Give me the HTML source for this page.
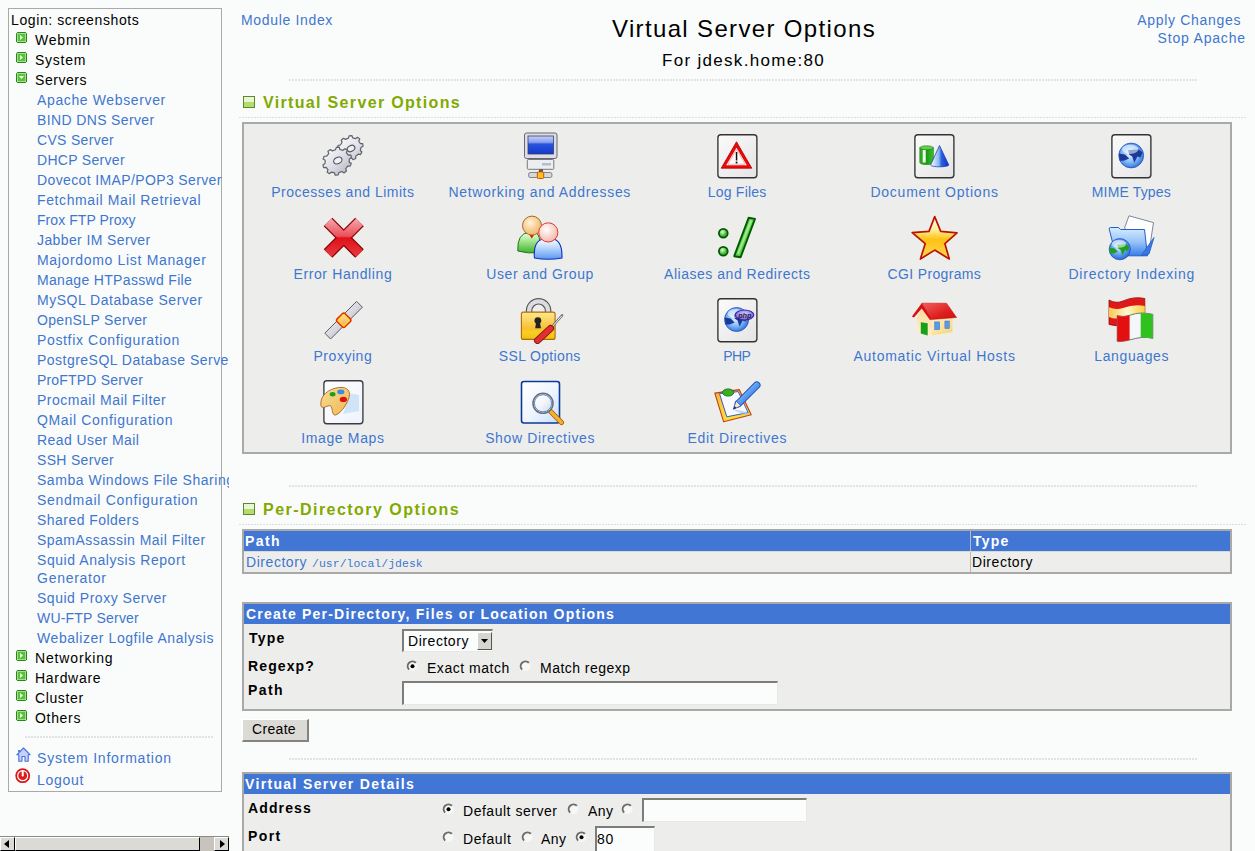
<!DOCTYPE html>
<html><head><meta charset="utf-8"><title>Virtual Server Options</title>
<style>
*{margin:0;padding:0;box-sizing:border-box}
html,body{width:1255px;height:851px;overflow:hidden;background:#fafcfb;font-family:"Liberation Sans",sans-serif;font-size:14px;color:#000}
.a{position:absolute;white-space:nowrap}
svg{display:block}
.dot{position:absolute;height:1px;background-image:linear-gradient(to right,#dcdede 66%,transparent 66%);background-size:3px 1px}
.dot2{position:absolute;height:2px;background-image:linear-gradient(to right,#e2e4e4 66%,transparent 66%);background-size:3px 2px}
.ic{position:absolute;width:48px;height:48px}
.panel{position:absolute;background:#edeeeb;border:2px solid #a9aaa8}
.hdr{position:absolute;background:#4176d4}
.radio{position:absolute;width:12px;height:12px}
.inp{position:absolute;background:#fbfcfc;border-top:2px solid #7d7d7a;border-left:2px solid #7d7d7a;border-right:1px solid #e8e8e6;border-bottom:1px solid #e8e8e6}
</style></head>
<body>
<div style="position:absolute;left:0;top:0;width:229px;height:851px;overflow:hidden"><div style="position:absolute;left:8px;top:8px;width:214px;height:784px;border:1px solid #a8a9a9"></div><div class="a" style="top:11.00px;font-size:14px;line-height:18px;letter-spacing:0.603px;left:11px;">Login: screenshots</div><div style="position:absolute;left:16px;top:32px;width:11px;height:11px"><svg width="11" height="11" viewBox="0 0 11 11"><path d="M1.5 0 H9.5 L11 1.5 V9.5 L9.5 11 H1.5 L0 9.5 V1.5 Z" fill="#2a8420"/><rect x="1" y="1" width="9" height="9" rx="0.5" fill="#b8e8a0"/><rect x="1.8" y="1.8" width="7.4" height="7.4" fill="#58c238"/><path d="M4 3 L7 5.5 L4 8 Z" fill="#fff"/></svg></div><div class="a" style="top:31.00px;font-size:14px;line-height:18px;letter-spacing:0.782px;left:35px;">Webmin</div><div style="position:absolute;left:16px;top:52px;width:11px;height:11px"><svg width="11" height="11" viewBox="0 0 11 11"><path d="M1.5 0 H9.5 L11 1.5 V9.5 L9.5 11 H1.5 L0 9.5 V1.5 Z" fill="#2a8420"/><rect x="1" y="1" width="9" height="9" rx="0.5" fill="#b8e8a0"/><rect x="1.8" y="1.8" width="7.4" height="7.4" fill="#58c238"/><path d="M4 3 L7 5.5 L4 8 Z" fill="#fff"/></svg></div><div class="a" style="top:51.00px;font-size:14px;line-height:18px;letter-spacing:0.748px;left:35px;">System</div><div style="position:absolute;left:16px;top:72px;width:11px;height:11px"><svg width="11" height="11" viewBox="0 0 11 11"><path d="M1.5 0 H9.5 L11 1.5 V9.5 L9.5 11 H1.5 L0 9.5 V1.5 Z" fill="#2a8420"/><rect x="1" y="1" width="9" height="9" rx="0.5" fill="#b8e8a0"/><rect x="1.8" y="1.8" width="7.4" height="7.4" fill="#58c238"/><path d="M3 4 L8 4 L5.5 7 Z" fill="#fff"/></svg></div><div class="a" style="top:71.00px;font-size:14px;line-height:18px;letter-spacing:0.558px;left:35px;">Servers</div><div class="a" style="top:91.00px;font-size:14px;line-height:18px;letter-spacing:0.630px;color:#3f76cf;left:37px;">Apache Webserver</div><div class="a" style="top:111.00px;font-size:14px;line-height:18px;letter-spacing:0.368px;color:#3f76cf;left:37px;">BIND DNS Server</div><div class="a" style="top:131.00px;font-size:14px;line-height:18px;letter-spacing:0.312px;color:#3f76cf;left:37px;">CVS Server</div><div class="a" style="top:151.00px;font-size:14px;line-height:18px;letter-spacing:0.300px;color:#3f76cf;left:37px;">DHCP Server</div><div class="a" style="top:171.00px;font-size:14px;line-height:18px;letter-spacing:0.373px;color:#3f76cf;left:37px;">Dovecot IMAP/POP3 Server</div><div class="a" style="top:191.00px;font-size:14px;line-height:18px;letter-spacing:0.616px;color:#3f76cf;left:37px;">Fetchmail Mail Retrieval</div><div class="a" style="top:211.00px;font-size:14px;line-height:18px;letter-spacing:0.066px;color:#3f76cf;left:37px;">Frox FTP Proxy</div><div class="a" style="top:231.00px;font-size:14px;line-height:18px;letter-spacing:0.386px;color:#3f76cf;left:37px;">Jabber IM Server</div><div class="a" style="top:251.00px;font-size:14px;line-height:18px;letter-spacing:0.669px;color:#3f76cf;left:37px;">Majordomo List Manager</div><div class="a" style="top:271.00px;font-size:14px;line-height:18px;letter-spacing:0.328px;color:#3f76cf;left:37px;">Manage HTPasswd File</div><div class="a" style="top:291.00px;font-size:14px;line-height:18px;letter-spacing:0.508px;color:#3f76cf;left:37px;">MySQL Database Server</div><div class="a" style="top:311.00px;font-size:14px;line-height:18px;letter-spacing:0.342px;color:#3f76cf;left:37px;">OpenSLP Server</div><div class="a" style="top:331.00px;font-size:14px;line-height:18px;letter-spacing:0.652px;color:#3f76cf;left:37px;">Postfix Configuration</div><div class="a" style="top:351.00px;font-size:14px;line-height:18px;letter-spacing:0.474px;color:#3f76cf;left:37px;">PostgreSQL Database Server</div><div class="a" style="top:371.00px;font-size:14px;line-height:18px;letter-spacing:0.180px;color:#3f76cf;left:37px;">ProFTPD Server</div><div class="a" style="top:391.00px;font-size:14px;line-height:18px;letter-spacing:0.513px;color:#3f76cf;left:37px;">Procmail Mail Filter</div><div class="a" style="top:411.00px;font-size:14px;line-height:18px;letter-spacing:0.650px;color:#3f76cf;left:37px;">QMail Configuration</div><div class="a" style="top:431.00px;font-size:14px;line-height:18px;letter-spacing:0.419px;color:#3f76cf;left:37px;">Read User Mail</div><div class="a" style="top:451.00px;font-size:14px;line-height:18px;letter-spacing:0.318px;color:#3f76cf;left:37px;">SSH Server</div><div class="a" style="top:471.00px;font-size:14px;line-height:18px;letter-spacing:0.535px;color:#3f76cf;left:37px;">Samba Windows File Sharing</div><div class="a" style="top:491.00px;font-size:14px;line-height:18px;letter-spacing:0.719px;color:#3f76cf;left:37px;">Sendmail Configuration</div><div class="a" style="top:511.00px;font-size:14px;line-height:18px;letter-spacing:0.464px;color:#3f76cf;left:37px;">Shared Folders</div><div class="a" style="top:531.00px;font-size:14px;line-height:18px;letter-spacing:0.479px;color:#3f76cf;left:37px;">SpamAssassin Mail Filter</div><div class="a" style="top:551.00px;font-size:14px;line-height:18px;letter-spacing:0.554px;color:#3f76cf;left:37px;">Squid Analysis Report</div><div class="a" style="top:569.00px;font-size:14px;line-height:18px;letter-spacing:0.738px;color:#3f76cf;left:37px;">Generator</div><div class="a" style="top:589.00px;font-size:14px;line-height:18px;letter-spacing:0.518px;color:#3f76cf;left:37px;">Squid Proxy Server</div><div class="a" style="top:609.00px;font-size:14px;line-height:18px;letter-spacing:0.205px;color:#3f76cf;left:37px;">WU-FTP Server</div><div class="a" style="top:629.00px;font-size:14px;line-height:18px;letter-spacing:0.566px;color:#3f76cf;left:37px;">Webalizer Logfile Analysis</div><div style="position:absolute;left:16px;top:650px;width:11px;height:11px"><svg width="11" height="11" viewBox="0 0 11 11"><path d="M1.5 0 H9.5 L11 1.5 V9.5 L9.5 11 H1.5 L0 9.5 V1.5 Z" fill="#2a8420"/><rect x="1" y="1" width="9" height="9" rx="0.5" fill="#b8e8a0"/><rect x="1.8" y="1.8" width="7.4" height="7.4" fill="#58c238"/><path d="M4 3 L7 5.5 L4 8 Z" fill="#fff"/></svg></div><div class="a" style="top:649.00px;font-size:14px;line-height:18px;letter-spacing:0.847px;left:35px;">Networking</div><div style="position:absolute;left:16px;top:670px;width:11px;height:11px"><svg width="11" height="11" viewBox="0 0 11 11"><path d="M1.5 0 H9.5 L11 1.5 V9.5 L9.5 11 H1.5 L0 9.5 V1.5 Z" fill="#2a8420"/><rect x="1" y="1" width="9" height="9" rx="0.5" fill="#b8e8a0"/><rect x="1.8" y="1.8" width="7.4" height="7.4" fill="#58c238"/><path d="M4 3 L7 5.5 L4 8 Z" fill="#fff"/></svg></div><div class="a" style="top:669.00px;font-size:14px;line-height:18px;letter-spacing:0.694px;left:35px;">Hardware</div><div style="position:absolute;left:16px;top:690px;width:11px;height:11px"><svg width="11" height="11" viewBox="0 0 11 11"><path d="M1.5 0 H9.5 L11 1.5 V9.5 L9.5 11 H1.5 L0 9.5 V1.5 Z" fill="#2a8420"/><rect x="1" y="1" width="9" height="9" rx="0.5" fill="#b8e8a0"/><rect x="1.8" y="1.8" width="7.4" height="7.4" fill="#58c238"/><path d="M4 3 L7 5.5 L4 8 Z" fill="#fff"/></svg></div><div class="a" style="top:689.00px;font-size:14px;line-height:18px;letter-spacing:0.622px;left:35px;">Cluster</div><div style="position:absolute;left:16px;top:710px;width:11px;height:11px"><svg width="11" height="11" viewBox="0 0 11 11"><path d="M1.5 0 H9.5 L11 1.5 V9.5 L9.5 11 H1.5 L0 9.5 V1.5 Z" fill="#2a8420"/><rect x="1" y="1" width="9" height="9" rx="0.5" fill="#b8e8a0"/><rect x="1.8" y="1.8" width="7.4" height="7.4" fill="#58c238"/><path d="M4 3 L7 5.5 L4 8 Z" fill="#fff"/></svg></div><div class="a" style="top:709.00px;font-size:14px;line-height:18px;letter-spacing:0.682px;left:35px;">Others</div><div class="dot2" style="left:25px;top:736px;width:188px"></div><div style="position:absolute;left:16px;top:747px;width:16px;height:16px"><svg width="16" height="16" viewBox="0 0 16 16"><path d="M0.8 7.8 L7.5 1 L14.2 7.8 H12.2 V14.2 H9 V9.5 H6 V14.2 H2.8 V7.8 Z" fill="#c4d2f8" stroke="#4a6ee0" stroke-width="1.1" stroke-linejoin="round"/><path d="M3 3 V5" stroke="#3c64d8" stroke-width="1.6"/></svg></div><div class="a" style="top:749.00px;font-size:14px;line-height:18px;letter-spacing:0.797px;color:#3f76cf;left:37px;">System Information</div><div style="position:absolute;left:15px;top:768px;width:16px;height:16px"><svg width="16" height="16" viewBox="0 0 16 16"><circle cx="7.7" cy="7.7" r="7.4" fill="#d81818"/><circle cx="7.7" cy="7.7" r="5.6" fill="#fff"/><circle cx="7.7" cy="7.7" r="4.4" fill="#dc1e1e"/><rect x="6.7" y="2.5" width="2" height="6" rx="0.8" fill="#fff"/></svg></div><div class="a" style="top:771.00px;font-size:14px;line-height:18px;letter-spacing:0.692px;color:#3f76cf;left:37px;">Logout</div><div style="position:absolute;left:0;top:836px;width:229px;height:15px;background:#c8c4bd;border-top:1px solid #8a8a88"></div><div style="position:absolute;left:0;top:837px;width:15px;height:14px;background:#dcdad5;border-top:1px solid #fff;border-left:1px solid #fff;border-right:1px solid #000;border-bottom:1px solid #000"></div><svg style="position:absolute;left:4px;top:840px" width="6" height="8"><path d="M5 0 V8 L0 4 Z" fill="#000"/></svg><div style="position:absolute;left:15px;top:837px;width:185px;height:14px;background:#dcdad5;border-top:1px solid #fff;border-left:1px solid #fff;border-right:1px solid #000;border-bottom:1px solid #000"></div><div style="position:absolute;left:214px;top:837px;width:15px;height:14px;background:#dcdad5;border-top:1px solid #fff;border-left:1px solid #fff;border-right:1px solid #000;border-bottom:1px solid #000"></div><svg style="position:absolute;left:220px;top:840px" width="6" height="8"><path d="M0 0 V8 L5 4 Z" fill="#000"/></svg></div><div class="a" style="top:11.00px;font-size:14px;line-height:18px;letter-spacing:0.664px;color:#3f76cf;left:241px;">Module Index</div><div class="a" style="top:15.00px;font-size:24px;line-height:28px;letter-spacing:1.349px;left:612px;">Virtual Server Options</div><div class="a" style="top:51.00px;font-size:17px;line-height:20px;letter-spacing:1.306px;left:662px;">For jdesk.home:80</div><div class="a" style="top:11.00px;font-size:14px;line-height:18px;letter-spacing:0.696px;color:#3f76cf;right:13.80px;">Apply Changes</div><div class="a" style="top:29.00px;font-size:14px;line-height:18px;letter-spacing:0.803px;color:#3f76cf;right:9.20px;">Stop Apache</div><div class="dot2" style="left:289px;top:79px;width:908px"></div><div style="position:absolute;left:243px;top:96px;width:12px;height:12px"><svg width="12" height="12" viewBox="0 0 12 12"><rect x="0.5" y="0.5" width="11" height="11" fill="#b4dc6a" stroke="#5a8a30"/><rect x="1" y="1" width="10" height="5" fill="#eaf6d2"/></svg></div><div class="a" style="top:93.00px;font-size:16px;line-height:20px;letter-spacing:1.334px;font-weight:bold;color:#82a900;left:263px;">Virtual Server Options</div><div class="dot" style="left:239px;top:117px;width:1008px"></div><div class="panel" style="left:242px;top:122px;width:990px;height:332px"></div><div class="ic" style="left:319px;top:132px"><svg width="48" height="48" viewBox="0 0 48 48"><defs><linearGradient id="gg1" x1="0" y1="0" x2="1" y2="1"><stop offset="0" stop-color="#ffffff"/><stop offset="0.6" stop-color="#e0e0e8"/><stop offset="1" stop-color="#b8bac4"/></linearGradient><linearGradient id="gg2" x1="0" y1="0" x2="1" y2="1"><stop offset="0" stop-color="#ffffff"/><stop offset="0.5" stop-color="#dcdde6"/><stop offset="1" stop-color="#b0b2bc"/></linearGradient></defs><path d="M41.31 11.54 L43.64 11.59 L44.08 14.33 L41.95 15.47 L41.33 18.52 L42.93 20.01 L41.40 22.57 L39.14 22.18 L36.66 24.33 L36.78 26.56 L34.00 27.73 L32.67 26.00 L29.48 26.24 L28.07 28.16 L25.33 27.40 L25.55 25.14 L23.15 23.36 L20.87 24.08 L19.45 21.74 L21.12 20.01 L20.64 17.03 L18.55 16.21 L19.12 13.39 L21.46 13.00 L23.11 10.23 L22.20 8.25 L24.49 6.27 L26.40 7.39 L29.42 6.12 L30.10 3.91 L33.04 3.69 L33.63 5.81 L36.60 6.64 L38.57 5.23 L40.78 6.88 L39.77 9.00 Z" fill="url(#gg1)" stroke="#60636a" stroke-width="1.2" stroke-linejoin="round"/><ellipse cx="32" cy="16.5" rx="4" ry="2.9" transform="rotate(-28 32 16.5)" fill="#f0f0f4" stroke="#55585e" stroke-width="1.2"/><path d="M29.19 23.06 L31.72 22.80 L32.53 25.50 L30.36 26.96 L30.22 30.12 L32.28 31.34 L31.23 34.14 L28.71 34.17 L26.67 36.83 L27.46 39.06 L24.96 40.90 L23.04 39.48 L19.88 40.63 L19.11 43.02 L16.10 43.18 L15.53 40.87 L12.45 40.06 L10.40 41.69 L8.04 40.12 L9.04 37.80 L7.21 35.34 L4.68 35.60 L3.87 32.90 L6.04 31.44 L6.18 28.28 L4.12 27.06 L5.17 24.26 L7.69 24.23 L9.73 21.57 L8.94 19.34 L11.44 17.50 L13.36 18.92 L16.52 17.77 L17.29 15.38 L20.30 15.22 L20.87 17.53 L23.95 18.34 L26.00 16.71 L28.36 18.28 L27.36 20.60 Z" fill="url(#gg2)" stroke="#60636a" stroke-width="1.2" stroke-linejoin="round"/><ellipse cx="18.8" cy="28.5" rx="4.4" ry="3.2" transform="rotate(-28 18.8 28.5)" fill="#f0f0f4" stroke="#55585e" stroke-width="1.2"/></svg></div><div class="a" style="top:183.00px;font-size:14px;line-height:18px;letter-spacing:0.514px;color:#3f76cf;left:271.19px;">Processes and Limits</div><div class="ic" style="left:516px;top:132px"><svg width="48" height="48" viewBox="0 0 48 48"><defs><linearGradient id="scr" x1="0" y1="0" x2="0" y2="1"><stop offset="0" stop-color="#c8d0f4"/><stop offset="0.35" stop-color="#8aa0ee"/><stop offset="0.45" stop-color="#2a54e0"/><stop offset="1" stop-color="#1438c8"/></linearGradient></defs><rect x="8.5" y="1" width="32.5" height="25.5" rx="2" fill="#dcdde6" stroke="#66686e" stroke-width="1"/><rect x="12" y="4" width="25.5" height="18" fill="url(#scr)" stroke="#39406a" stroke-width="0.8"/><rect x="11.3" y="27.5" width="26.5" height="9.8" rx="1" fill="#eceef2" stroke="#76787e"/><rect x="26" y="31" width="9" height="2.5" fill="#b8bcc8"/><rect x="23" y="37.3" width="4" height="3" fill="#555"/><rect x="12.7" y="40.5" width="23.2" height="5" rx="1.5" fill="#d8d8dc" stroke="#77797e" stroke-width="0.9"/><rect x="21.3" y="39.9" width="6.4" height="6.6" rx="1" fill="#f8c020" stroke="#d05010" stroke-width="1"/></svg></div><div class="a" style="top:183.00px;font-size:14px;line-height:18px;letter-spacing:0.665px;color:#3f76cf;left:448.50px;">Networking and Addresses</div><div class="ic" style="left:713px;top:132px"><svg width="48" height="48" viewBox="0 0 48 48"><defs><linearGradient id="boxg" x1="0" y1="0" x2="1" y2="1"><stop offset="0" stop-color="#fbfbfb"/><stop offset="1" stop-color="#e4e4e4"/></linearGradient></defs><rect x="4.9" y="2.7" width="39" height="43" rx="3" fill="url(#boxg)" stroke="#333" stroke-width="1.35"/><path d="M23.5 9.8 L38.8 36.2 H8.2 Z" fill="#e80a0a" stroke="#b00000" stroke-width="0.8" stroke-linejoin="round"/><path d="M23.5 15.8 L33.8 33.3 H13.2 Z" fill="#fff"/><path d="M23.5 17.5 L32 32.2 H15 Z" fill="none" stroke="#f4a0a0" stroke-width="0.8"/><rect x="22.8" y="20" width="1.5" height="8.5" fill="#111"/><rect x="22.7" y="29.6" width="1.8" height="1.8" fill="#111"/></svg></div><div class="a" style="top:183.00px;font-size:14px;line-height:18px;letter-spacing:0.241px;color:#3f76cf;left:707.63px;">Log Files</div><div class="ic" style="left:910px;top:132px"><svg width="48" height="48" viewBox="0 0 48 48"><defs><linearGradient id="boxg" x1="0" y1="0" x2="1" y2="1"><stop offset="0" stop-color="#fbfbfb"/><stop offset="1" stop-color="#e4e4e4"/></linearGradient><linearGradient id="cyl" x1="0" y1="0" x2="1" y2="0"><stop offset="0" stop-color="#30b020"/><stop offset="0.5" stop-color="#1a9a10"/><stop offset="1" stop-color="#3ac030"/></linearGradient><linearGradient id="cone" x1="0" y1="0" x2="1" y2="0"><stop offset="0" stop-color="#ffffff"/><stop offset="0.45" stop-color="#8ab8f0"/><stop offset="0.6" stop-color="#2a60e0"/><stop offset="1" stop-color="#1030c0"/></linearGradient></defs><rect x="4.9" y="2.7" width="39" height="43" rx="3" fill="url(#boxg)" stroke="#333" stroke-width="1.35"/><path d="M9.8 15.8 V30.6 A6.8 2 0 0 0 23.4 30.6 V15.8 Z" fill="url(#cyl)" stroke="#1a7a10" stroke-width="0.6"/><ellipse cx="16.6" cy="15.8" rx="6.8" ry="2" fill="#60d050" stroke="#1a7a10" stroke-width="0.6"/><rect x="12.7" y="18" width="3" height="12.5" fill="#f0fff0"/><path d="M29.5 13.5 L38.8 33 A9 1.8 0 0 1 20.6 33 Z" fill="url(#cone)" stroke="#1030b0" stroke-width="0.7"/></svg></div><div class="a" style="top:183.00px;font-size:14px;line-height:18px;letter-spacing:0.777px;color:#3f76cf;left:870.40px;">Document Options</div><div class="ic" style="left:1107px;top:132px"><svg width="48" height="48" viewBox="0 0 48 48"><defs><linearGradient id="boxg" x1="0" y1="0" x2="1" y2="1"><stop offset="0" stop-color="#fbfbfb"/><stop offset="1" stop-color="#e4e4e4"/></linearGradient><radialGradient id="gsea" cx="0.45" cy="0.45" r="0.6"><stop offset="0" stop-color="#eaf4ff"/><stop offset="0.55" stop-color="#80b8f6"/><stop offset="1" stop-color="#2a6ad8"/></radialGradient></defs><rect x="4.9" y="2.7" width="39" height="43" rx="3" fill="url(#boxg)" stroke="#333" stroke-width="1.35"/><circle cx="24.2" cy="23.5" r="12.4" fill="url(#gsea)" stroke="#1c50c0" stroke-width="0.8"/><path d="M11.80 21.43 L18.00 22.47 L22.13 26.60 L16.97 28.67 L12.83 28.67 Z" fill="#1a3a98"/><path d="M21.10 18.33 L31.43 17.30 L35.57 20.40 L33.50 25.57 L30.40 24.53 L27.30 30.73 L25.23 24.53 L22.13 22.47 Z" fill="#1a3a98"/><ellipse cx="23.17" cy="17.30" rx="8.27" ry="4.65" fill="#ffffff" opacity="0.55"/></svg></div><div class="a" style="top:183.00px;font-size:14px;line-height:18px;letter-spacing:0.162px;color:#3f76cf;left:1091.77px;">MIME Types</div><div class="ic" style="left:319px;top:214px"><svg width="48" height="48" viewBox="0 0 48 48"><defs><linearGradient gradientUnits="userSpaceOnUse"  id="xg" x1="0" y1="6" x2="0" y2="42"><stop offset="0" stop-color="#f4a0a8"/><stop offset="0.45" stop-color="#ea5058"/><stop offset="0.5" stop-color="#e01018"/><stop offset="1" stop-color="#e83840"/></linearGradient></defs><g stroke="#8a0000" stroke-width="2.6" stroke-linejoin="round"><path d="M9 8 L40.5 39.5" stroke-width="12.2"/><path d="M40.5 8 L9 39.5" stroke-width="12.2"/></g><g stroke="url(#xg)" stroke-linecap="butt"><path d="M9 8 L40.5 39.5" stroke-width="9.6"/><path d="M40.5 8 L9 39.5" stroke-width="9.6"/></g></svg></div><div class="a" style="top:265.00px;font-size:14px;line-height:18px;letter-spacing:0.621px;color:#3f76cf;left:293.43px;">Error Handling</div><div class="ic" style="left:516px;top:214px"><svg width="48" height="48" viewBox="0 0 48 48"><defs><linearGradient id="gb" x1="0" y1="0" x2="0" y2="1"><stop offset="0" stop-color="#f0fff0"/><stop offset="0.4" stop-color="#a8e890"/><stop offset="1" stop-color="#40b030"/></linearGradient><linearGradient id="bb" x1="0" y1="0" x2="0" y2="1"><stop offset="0" stop-color="#ffffff"/><stop offset="0.35" stop-color="#c8e0ff"/><stop offset="1" stop-color="#5a98f0"/></linearGradient><radialGradient id="hd1" cx="0.4" cy="0.35" r="0.7"><stop offset="0" stop-color="#fff4d8"/><stop offset="1" stop-color="#f0b060"/></radialGradient><radialGradient id="hd2" cx="0.4" cy="0.35" r="0.7"><stop offset="0" stop-color="#ffffff"/><stop offset="1" stop-color="#f4b4a4"/></radialGradient></defs><path d="M1.8 37 Q1 19 13 18.5 H19 Q25 19 24 38.5 Q12 40 1.8 37 Z" fill="url(#gb)" stroke="#1a7a10" stroke-width="1"/><path d="M13.5 21 L18 21 L15.8 24.5 Z" fill="#e01010"/><circle cx="16" cy="11.6" r="9.5" fill="url(#hd1)" stroke="#a86a28" stroke-width="1"/><path d="M18.5 44 Q16.5 26 29 24.8 H36 Q46.5 26 46 44 Q32 46.5 18.5 44 Z" fill="url(#bb)" stroke="#1030c0" stroke-width="1.1"/><circle cx="32.3" cy="18.4" r="9.6" fill="url(#hd2)" stroke="#e03838" stroke-width="1"/></svg></div><div class="a" style="top:265.00px;font-size:14px;line-height:18px;letter-spacing:0.569px;color:#3f76cf;left:486.30px;">User and Group</div><div class="ic" style="left:713px;top:214px"><svg width="48" height="48" viewBox="0 0 48 48"><defs><radialGradient id="ad" cx="0.4" cy="0.35" r="0.6"><stop offset="0" stop-color="#e8ffe0"/><stop offset="0.5" stop-color="#70d060"/><stop offset="1" stop-color="#20a020"/></radialGradient></defs><circle cx="10.3" cy="19.3" r="4.4" fill="url(#ad)" stroke="#005a00" stroke-width="1.8"/><circle cx="10.3" cy="37.3" r="4.4" fill="url(#ad)" stroke="#005a00" stroke-width="1.8"/><path d="M35.6 3.8 L42 4.9 L27.6 43.2 L21.2 42.2 Z" fill="#5ad04a" stroke="#005a00" stroke-width="1.9" stroke-linejoin="round"/><path d="M37 6 L39.5 6.5 L26 40 L24 39.7 Z" fill="#c0f0b0" opacity="0.7"/></svg></div><div class="a" style="top:265.00px;font-size:14px;line-height:18px;letter-spacing:0.525px;color:#3f76cf;left:664.05px;">Aliases and Redirects</div><div class="ic" style="left:910px;top:214px"><svg width="48" height="48" viewBox="0 0 48 48"><defs><linearGradient id="st" x1="0" y1="0" x2="0" y2="1"><stop offset="0" stop-color="#fffff0"/><stop offset="0.3" stop-color="#fff0a0"/><stop offset="0.55" stop-color="#ffc010"/><stop offset="1" stop-color="#ffd860"/></linearGradient></defs><path d="M24.7 2.6 L30.7 17.4 L47 18.9 L34.9 29.7 L39.3 45 L24.7 36.1 L10.4 45 L15.2 29.7 L2.2 18.6 L19 17.4 Z" fill="url(#st)" stroke="#b81400" stroke-width="1.7" stroke-linejoin="round"/></svg></div><div class="a" style="top:265.00px;font-size:14px;line-height:18px;letter-spacing:0.349px;color:#3f76cf;left:887.55px;">CGI Programs</div><div class="ic" style="left:1107px;top:214px"><svg width="48" height="48" viewBox="0 0 48 48"><defs><linearGradient id="fb" x1="0" y1="0" x2="0" y2="1"><stop offset="0" stop-color="#d8ecff"/><stop offset="0.5" stop-color="#98c4f8"/><stop offset="1" stop-color="#3a7ee8"/></linearGradient><radialGradient id="gsea2" cx="0.45" cy="0.4" r="0.6"><stop offset="0" stop-color="#e0f0ff"/><stop offset="0.5" stop-color="#70acf4"/><stop offset="1" stop-color="#2a6ad8"/></radialGradient></defs><path d="M22 1.8 L46.5 8.6 L41.8 39 L17.5 14 Z" fill="#ffffff" stroke="#6a7a9a" stroke-width="0.9"/><path d="M2.2 15 Q2 13.5 3.5 13.5 H11.5 L13.5 15.5 H37.5 L40.5 41.8 H9 Z" fill="url(#fb)" stroke="#2060c8" stroke-width="1"/><path d="M47 23.5 L42 40 L34 41.8 Z" fill="#3a78e0" stroke="#2060c8" stroke-width="0.8"/><circle cx="12.8" cy="35.2" r="10.6" fill="url(#gsea2)" stroke="#1c50c0" stroke-width="0.8"/><path d="M2.20 33.43 L7.50 34.32 L11.03 37.85 L6.62 39.62 L3.08 39.62 Z" fill="#20a020"/><path d="M10.15 30.78 L18.98 29.90 L22.52 32.55 L20.75 36.97 L18.10 36.08 L15.45 41.38 L13.68 36.08 L11.03 34.32 Z" fill="#20a020"/><ellipse cx="11.92" cy="29.90" rx="7.07" ry="3.97" fill="#ffffff" opacity="0.55"/></svg></div><div class="a" style="top:265.00px;font-size:14px;line-height:18px;letter-spacing:0.764px;color:#3f76cf;left:1068.49px;">Directory Indexing</div><div class="ic" style="left:319px;top:296px"><svg width="48" height="48" viewBox="0 0 48 48"><defs><linearGradient id="bar" x1="0" y1="0" x2="1" y2="1"><stop offset="0" stop-color="#ffffff"/><stop offset="0.5" stop-color="#d8d8e0"/><stop offset="1" stop-color="#9a9ca8"/></linearGradient><linearGradient id="osq" x1="0" y1="0" x2="1" y2="1"><stop offset="0" stop-color="#fff0b0"/><stop offset="1" stop-color="#f0a040"/></linearGradient></defs><path d="M5.8 37.2 L37.6 5.4 L43.4 11.2 L11.6 43 Z" fill="url(#bar)" stroke="#5a5c62" stroke-width="1" stroke-linejoin="round"/><rect x="19.1" y="18.7" width="11.2" height="11.2" rx="2" transform="rotate(45 24.7 24.3)" fill="url(#osq)" stroke="#e03000" stroke-width="1.5"/><rect x="20.6" y="20.2" width="8.2" height="8.2" rx="1" transform="rotate(45 24.7 24.3)" fill="none" stroke="#ffe020" stroke-width="1"/></svg></div><div class="a" style="top:347.00px;font-size:14px;line-height:18px;letter-spacing:0.541px;color:#3f76cf;left:313.47px;">Proxying</div><div class="ic" style="left:516px;top:296px"><svg width="48" height="48" viewBox="0 0 48 48"><defs><linearGradient id="lk" x1="0" y1="0" x2="0" y2="1"><stop offset="0" stop-color="#ffe890"/><stop offset="0.6" stop-color="#f8c030"/><stop offset="0.75" stop-color="#f8d020"/><stop offset="1" stop-color="#f0c010"/></linearGradient></defs><path d="M13.1 17 V14.8 A9.5 9.5 0 0 1 32.1 14.8 V17" fill="none" stroke="#5a5a5e" stroke-width="6.6"/><path d="M13.1 17 V14.8 A9.5 9.5 0 0 1 32.1 14.8 V17" fill="none" stroke="#dcdce2" stroke-width="4.2"/><rect x="5.4" y="16.1" width="33.7" height="27.3" rx="2" fill="url(#lk)" stroke="#b06a08" stroke-width="1.1"/><circle cx="21.9" cy="24.6" r="3.4" fill="#222"/><path d="M20.3 25 L19.2 32.3 H25 L23.6 25 Z" fill="#222"/><path d="M34.5 32.5 L46.2 19.3" stroke="#666" stroke-width="2.4" stroke-linecap="round"/><path d="M35 32 L46 19.6" stroke="#fff" stroke-width="1"/><path d="M21.5 44.5 L34.5 32.5" stroke="#801010" stroke-width="7" stroke-linecap="round"/><path d="M21.5 44.5 L34.5 32.5" stroke="#e03030" stroke-width="5.2" stroke-linecap="round"/></svg></div><div class="a" style="top:347.00px;font-size:14px;line-height:18px;letter-spacing:0.342px;color:#3f76cf;left:498.79px;">SSL Options</div><div class="ic" style="left:713px;top:296px"><svg width="48" height="48" viewBox="0 0 48 48"><defs><linearGradient id="boxg" x1="0" y1="0" x2="1" y2="1"><stop offset="0" stop-color="#fbfbfb"/><stop offset="1" stop-color="#e4e4e4"/></linearGradient><radialGradient id="gsea" cx="0.45" cy="0.45" r="0.6"><stop offset="0" stop-color="#eaf4ff"/><stop offset="0.55" stop-color="#80b8f6"/><stop offset="1" stop-color="#2a6ad8"/></radialGradient><radialGradient id="pe" cx="0.5" cy="0.4" r="0.6"><stop offset="0" stop-color="#d8d0ff"/><stop offset="1" stop-color="#7060d8"/></radialGradient></defs><rect x="4.9" y="2.7" width="39" height="43" rx="3" fill="url(#boxg)" stroke="#333" stroke-width="1.35"/><circle cx="23.6" cy="23.5" r="12.0" fill="url(#gsea)" stroke="#1c50c0" stroke-width="0.8"/><path d="M11.60 21.50 L17.60 22.50 L21.60 26.50 L16.60 28.50 L12.60 28.50 Z" fill="#1a3a98"/><path d="M20.60 18.50 L30.60 17.50 L34.60 20.50 L32.60 25.50 L29.60 24.50 L26.60 30.50 L24.60 24.50 L21.60 22.50 Z" fill="#1a3a98"/><ellipse cx="22.60" cy="17.50" rx="8.00" ry="4.50" fill="#ffffff" opacity="0.55"/><ellipse cx="31.5" cy="19" rx="9.3" ry="5" fill="url(#pe)" stroke="#3a2ab0" stroke-width="1.2"/><text x="31.8" y="21.6" font-family="Liberation Sans" font-weight="bold" font-style="italic" font-size="7.2" letter-spacing="0" text-anchor="middle" fill="#2a1a40">php</text></svg></div><div class="a" style="top:347.00px;font-size:14px;line-height:18px;letter-spacing:-0.641px;color:#3f76cf;left:723.25px;">PHP</div><div class="ic" style="left:910px;top:296px"><svg width="48" height="48" viewBox="0 0 48 48"><defs><linearGradient id="wall1" x1="0" y1="0" x2="0" y2="1"><stop offset="0" stop-color="#f8dca0"/><stop offset="1" stop-color="#fff0c8"/></linearGradient><linearGradient id="wall2" x1="0" y1="0" x2="1" y2="1"><stop offset="0" stop-color="#fff8d0"/><stop offset="1" stop-color="#f8d070"/></linearGradient><linearGradient id="roof" x1="0" y1="0" x2="1" y2="1"><stop offset="0" stop-color="#f06060"/><stop offset="0.6" stop-color="#e02020"/><stop offset="1" stop-color="#c81010"/></linearGradient></defs><path d="M7 21 L11.7 11.6 L22.2 23.4 V40.2 L7.3 36 Z" fill="url(#wall1)"/><path d="M22.2 23.4 L42.5 22.1 V36.1 L17.7 40.2 L22.2 40 Z" fill="url(#wall2)"/><path d="M1.9 20.5 L11.7 7.2 L22.2 23.4 L20 24 L11.7 12.5 L4 21.5 Z" fill="#d81010"/><path d="M11.7 7.2 H36.5 L46.6 21.5 L22.2 23.4 Z" fill="url(#roof)" stroke="#c00" stroke-width="0.5"/><path d="M10.8 26.2 L17.7 27.2 V39.5 L10.8 37.6 Z" fill="#18a018"/><rect x="24.7" y="25.9" width="5" height="7.8" fill="#5a9ae8" stroke="#3a6ac8" stroke-width="0.5"/><rect x="34.9" y="25" width="4.4" height="7.5" fill="#5a9ae8" stroke="#3a6ac8" stroke-width="0.5"/></svg></div><div class="a" style="top:347.00px;font-size:14px;line-height:18px;letter-spacing:0.742px;color:#3f76cf;left:853.42px;">Automatic Virtual Hosts</div><div class="ic" style="left:1107px;top:296px"><svg width="48" height="48" viewBox="0 0 48 48"><defs><linearGradient id="yel" x1="0" y1="0" x2="1" y2="0"><stop offset="0" stop-color="#f8c850"/><stop offset="0.5" stop-color="#fff8d0"/><stop offset="1" stop-color="#f8d040"/></linearGradient></defs><path d="M2 4 Q9 8 16 5 Q27 0 37.8 2.5 V26 Q27 24 16 28 Q9 31 2 28.5 Z" fill="#e01818" stroke="#901010" stroke-width="0.8"/><path d="M2 11.3 Q9 14.5 16 12 Q27 8 37.8 10 V20 Q27 18 16 21 Q9 24 2 21 Z" fill="url(#yel)"/><path d="M10.2 19.6 Q16 21.5 22.6 19.3 Q29 17 34.7 17 Q41 17.2 45.8 18.3 V42.4 Q41 41 34.7 41.5 Q29 42 22.6 44 Q16 46 10.2 45.3 Z" fill="#f4f6fa" stroke="#6a6a70" stroke-width="0.9"/><path d="M10.2 19.6 Q16 21.5 22.6 19.3 V44 Q16 46 10.2 45.3 Z" fill="#e41010"/><path d="M33.7 17 Q41 17.2 45.8 18.3 V42.4 Q41 41 33.7 41.6 Z" fill="#30c020"/></svg></div><div class="a" style="top:347.00px;font-size:14px;line-height:18px;letter-spacing:0.619px;color:#3f76cf;left:1094.28px;">Languages</div><div class="ic" style="left:319px;top:378px"><svg width="48" height="48" viewBox="0 0 48 48"><defs><linearGradient id="boxi" x1="0" y1="0" x2="1" y2="1"><stop offset="0" stop-color="#ffffff"/><stop offset="1" stop-color="#eef2fa"/></linearGradient><linearGradient id="pal" x1="0" y1="0" x2="1" y2="1"><stop offset="0" stop-color="#f8dc98"/><stop offset="1" stop-color="#f0b850"/></linearGradient></defs><rect x="4.9" y="2.7" width="39" height="43" rx="3" fill="url(#boxi)" stroke="#3a3a44" stroke-width="1.35"/><path d="M31.5 15.5 L40 17 V33 L24 36 Z" fill="#c4dcf6" opacity="0.75"/><path d="M1.9 24 C2.5 15 14 9 23 9.4 C30 10 32 15 29.5 21 C27 28 21 36 16.4 37 C13.5 37.5 13.5 33 12.8 30 C12.2 27.5 10.5 27.2 8 28.3 C5 29.5 2 30.5 1.9 27 Z" fill="url(#pal)" stroke="#a86420" stroke-width="0.9"/><ellipse cx="13.6" cy="16.3" rx="2.9" ry="2.2" fill="#18a018"/><ellipse cx="21.8" cy="13.9" rx="3.6" ry="2.3" fill="#3a8ae8"/><ellipse cx="24.4" cy="21.4" rx="3.6" ry="2.6" fill="#e01010"/></svg></div><div class="a" style="top:429.00px;font-size:14px;line-height:18px;letter-spacing:0.640px;color:#3f76cf;left:301.20px;">Image Maps</div><div class="ic" style="left:516px;top:378px"><svg width="48" height="48" viewBox="0 0 48 48"><defs><linearGradient id="sd" x1="0" y1="0" x2="1" y2="1"><stop offset="0" stop-color="#ffffff"/><stop offset="0.5" stop-color="#f0f6ff"/><stop offset="1" stop-color="#c8e0fc"/></linearGradient><linearGradient id="lens" x1="0" y1="0" x2="1" y2="1"><stop offset="0" stop-color="#ffffff"/><stop offset="0.5" stop-color="#f4f6fa"/><stop offset="1" stop-color="#d0d8ea"/></linearGradient></defs><rect x="5.5" y="3.5" width="38" height="41.5" rx="2.5" fill="url(#sd)" stroke="#0c3a98" stroke-width="1.6"/><path d="M34.6 33.5 L45.5 44.5" stroke="#a86008" stroke-width="5" stroke-linecap="round"/><path d="M34.6 33.5 L45.5 44.5" stroke="#f8b030" stroke-width="3.2" stroke-linecap="round"/><circle cx="27" cy="25.3" r="10" fill="#ffffff" stroke="#707070" stroke-width="1.6"/><circle cx="27" cy="25.3" r="8.6" fill="url(#lens)" stroke="#4a86e0" stroke-width="1"/></svg></div><div class="a" style="top:429.00px;font-size:14px;line-height:18px;letter-spacing:0.641px;color:#3f76cf;left:485.13px;">Show Directives</div><div class="ic" style="left:713px;top:378px"><svg width="48" height="48" viewBox="0 0 48 48"><defs><linearGradient id="cb" x1="0" y1="0" x2="0" y2="1"><stop offset="0" stop-color="#f8b040"/><stop offset="1" stop-color="#ffe040"/></linearGradient><linearGradient id="pen" x1="0" y1="0" x2="1" y2="1"><stop offset="0" stop-color="#c8e0ff"/><stop offset="0.5" stop-color="#5a9af0"/><stop offset="1" stop-color="#2a60d0"/></linearGradient></defs><path d="M1.8 15.1 L26.2 11.6 L38.2 36.7 L10.6 43.7 Z" fill="url(#cb)" stroke="#c04010" stroke-width="1.1" stroke-linejoin="round"/><path d="M6.5 15.6 L25.2 13.6 L35.1 34.6 L13.8 38.8 Z" fill="#f8faff" stroke="#2050c8" stroke-width="0.9" stroke-linejoin="round"/><path d="M20 31.5 L35 34 L33 36 Z" fill="#a8c8f0" opacity="0.6"/><ellipse cx="15.1" cy="14.5" rx="5.7" ry="3.6" fill="#38b020" stroke="#106010" stroke-width="0.8"/><path d="M21 31 L37 36 L33 37.5 L22 33 Z" fill="#a8c8f0" opacity="0.5"/><path d="M25.5 25.5 L43.8 7.2" stroke="#1a48b8" stroke-width="7.4" stroke-linecap="round"/><path d="M25.5 25.5 L43.8 7.2" stroke="url(#pen)" stroke-width="5.6" stroke-linecap="round"/><path d="M23.1 22.9 L28.1 27.9 L20.3 31.2 Z" fill="#f8e8c0" stroke="#1a48b8" stroke-width="0.8" stroke-linejoin="round"/><path d="M20.3 31.2 L21.6 28 L23.5 29.9 Z" fill="#1a2a90"/></svg></div><div class="a" style="top:429.00px;font-size:14px;line-height:18px;letter-spacing:0.671px;color:#3f76cf;left:687.57px;">Edit Directives</div><div class="dot2" style="left:289px;top:485px;width:908px"></div><div style="position:absolute;left:243px;top:503px;width:12px;height:12px"><svg width="12" height="12" viewBox="0 0 12 12"><rect x="0.5" y="0.5" width="11" height="11" fill="#b4dc6a" stroke="#5a8a30"/><rect x="1" y="1" width="10" height="5" fill="#eaf6d2"/></svg></div><div class="a" style="top:500.00px;font-size:16px;line-height:20px;letter-spacing:1.464px;font-weight:bold;color:#82a900;left:263px;">Per-Directory Options</div><div class="dot" style="left:239px;top:524px;width:1008px"></div><div class="panel" style="left:242px;top:529px;width:990px;height:45px"></div><div class="hdr" style="left:244px;top:531px;width:986px;height:20px"></div><div style="position:absolute;left:970px;top:531px;width:1px;height:41px;background:#b9bab8"></div><div style="position:absolute;left:244px;top:551px;width:986px;height:1px;background:#d8d9d7"></div><div class="a" style="top:532.00px;font-size:14px;line-height:18px;letter-spacing:1.413px;font-weight:bold;color:#fff;left:245px;">Path</div><div class="a" style="top:532.00px;font-size:14px;line-height:18px;letter-spacing:1.224px;font-weight:bold;color:#fff;left:973px;">Type</div><div class="a" style="top:553.00px;font-size:14px;line-height:18px;letter-spacing:0.552px;color:#3f76cf;left:246px;">Directory</div><div class="a" style="top:557.00px;font-size:11.5px;line-height:14px;letter-spacing:0.022px;font-family:'Liberation Mono',monospace;color:#3f76cf;left:312px;">/usr/local/jdesk</div><div class="a" style="top:553.00px;font-size:14px;line-height:18px;letter-spacing:0.552px;left:972px;">Directory</div><div class="panel" style="left:242px;top:602px;width:990px;height:109px"></div><div class="hdr" style="left:244px;top:604px;width:986px;height:20px"></div><div class="a" style="top:605.00px;font-size:14px;line-height:18px;letter-spacing:1.220px;font-weight:bold;color:#fff;left:246px;">Create Per-Directory, Files or Location Options</div><div class="a" style="top:629.00px;font-size:14px;line-height:18px;letter-spacing:1.224px;font-weight:bold;left:249px;">Type</div><div class="a" style="top:657.00px;font-size:14px;line-height:18px;letter-spacing:1.120px;font-weight:bold;left:248px;">Regexp?</div><div class="a" style="top:681.00px;font-size:14px;line-height:18px;letter-spacing:1.413px;font-weight:bold;left:248px;">Path</div><div style="position:absolute;left:402px;top:629px;width:91px;height:23px;background:#fbfcfc;border-top:2px solid #7d7d7a;border-left:2px solid #7d7d7a;border-right:1px solid #e8e8e6;border-bottom:1px solid #e8e8e6"></div><div style="position:absolute;left:477px;top:632px;width:15px;height:18px;background:#d7d5cf;border-top:1px solid #fff;border-left:1px solid #fff;border-right:1px solid #555;border-bottom:1px solid #555"></div><svg style="position:absolute;left:481px;top:638px" width="8" height="6"><path d="M0 1 H7 L3.5 5 Z" fill="#000"/></svg><div class="a" style="top:632.00px;font-size:14px;line-height:18px;letter-spacing:0.552px;left:408px;">Directory</div><div class="radio" style="left:406px;top:660px"><svg width="12" height="12" viewBox="0 0 12 12"><circle cx="6.5" cy="6.2" r="5" fill="#f7f8f6"/><path d="M3.1 9.6 A4.8 4.8 0 0 1 9.9 2.8" fill="none" stroke="#6c6c6a" stroke-width="2"/><circle cx="6.5" cy="6.2" r="2" fill="#000"/></svg></div><div class="a" style="top:659.00px;font-size:14px;line-height:18px;letter-spacing:0.525px;left:427px;">Exact match</div><div class="radio" style="left:519px;top:660px"><svg width="12" height="12" viewBox="0 0 12 12"><circle cx="6.5" cy="6.2" r="5" fill="#f7f8f6"/><path d="M3.1 9.6 A4.8 4.8 0 0 1 9.9 2.8" fill="none" stroke="#6c6c6a" stroke-width="2"/></svg></div><div class="a" style="top:659.00px;font-size:14px;line-height:18px;letter-spacing:0.464px;left:540px;">Match regexp</div><div class="inp" style="left:402px;top:681px;width:376px;height:24px"></div><div style="position:absolute;left:242px;top:719px;width:67px;height:23px;background:#dcdad5;border-top:1px solid #fff;border-left:1px solid #fff;border-right:2px solid #838380;border-bottom:2px solid #838380"></div><div class="a" style="top:720.00px;font-size:14px;line-height:18px;letter-spacing:0.323px;left:252px;">Create</div><div class="dot2" style="left:289px;top:758px;width:908px"></div><div class="panel" style="left:242px;top:772px;width:990px;height:100px"></div><div class="hdr" style="left:244px;top:774px;width:986px;height:20px"></div><div class="a" style="top:775.00px;font-size:14px;line-height:18px;letter-spacing:1.343px;font-weight:bold;color:#fff;left:245px;">Virtual Server Details</div><div class="a" style="top:799.00px;font-size:14px;line-height:18px;letter-spacing:1.132px;font-weight:bold;left:248px;">Address</div><div class="a" style="top:827.00px;font-size:14px;line-height:18px;letter-spacing:1.369px;font-weight:bold;left:248px;">Port</div><div class="radio" style="left:442px;top:803px"><svg width="12" height="12" viewBox="0 0 12 12"><circle cx="6.5" cy="6.2" r="5" fill="#f7f8f6"/><path d="M3.1 9.6 A4.8 4.8 0 0 1 9.9 2.8" fill="none" stroke="#6c6c6a" stroke-width="2"/><circle cx="6.5" cy="6.2" r="2" fill="#000"/></svg></div><div class="a" style="top:802.00px;font-size:14px;line-height:18px;letter-spacing:0.520px;left:463px;">Default server</div><div class="radio" style="left:567px;top:803px"><svg width="12" height="12" viewBox="0 0 12 12"><circle cx="6.5" cy="6.2" r="5" fill="#f7f8f6"/><path d="M3.1 9.6 A4.8 4.8 0 0 1 9.9 2.8" fill="none" stroke="#6c6c6a" stroke-width="2"/></svg></div><div class="a" style="top:802.00px;font-size:14px;line-height:18px;letter-spacing:0.380px;left:588px;">Any</div><div class="radio" style="left:621px;top:803px"><svg width="12" height="12" viewBox="0 0 12 12"><circle cx="6.5" cy="6.2" r="5" fill="#f7f8f6"/><path d="M3.1 9.6 A4.8 4.8 0 0 1 9.9 2.8" fill="none" stroke="#6c6c6a" stroke-width="2"/></svg></div><div class="inp" style="left:642px;top:798px;width:165px;height:24px"></div><div class="radio" style="left:442px;top:831px"><svg width="12" height="12" viewBox="0 0 12 12"><circle cx="6.5" cy="6.2" r="5" fill="#f7f8f6"/><path d="M3.1 9.6 A4.8 4.8 0 0 1 9.9 2.8" fill="none" stroke="#6c6c6a" stroke-width="2"/></svg></div><div class="a" style="top:830.00px;font-size:14px;line-height:18px;letter-spacing:0.569px;left:463px;">Default</div><div class="radio" style="left:521px;top:831px"><svg width="12" height="12" viewBox="0 0 12 12"><circle cx="6.5" cy="6.2" r="5" fill="#f7f8f6"/><path d="M3.1 9.6 A4.8 4.8 0 0 1 9.9 2.8" fill="none" stroke="#6c6c6a" stroke-width="2"/></svg></div><div class="a" style="top:830.00px;font-size:14px;line-height:18px;letter-spacing:0.380px;left:541px;">Any</div><div class="radio" style="left:575px;top:831px"><svg width="12" height="12" viewBox="0 0 12 12"><circle cx="6.5" cy="6.2" r="5" fill="#f7f8f6"/><path d="M3.1 9.6 A4.8 4.8 0 0 1 9.9 2.8" fill="none" stroke="#6c6c6a" stroke-width="2"/><circle cx="6.5" cy="6.2" r="2" fill="#000"/></svg></div><div class="inp" style="left:595px;top:826px;width:60px;height:30px"></div><div class="a" style="top:830.00px;font-size:14px;line-height:18px;letter-spacing:0.631px;left:597px;">80</div>
</body></html>
